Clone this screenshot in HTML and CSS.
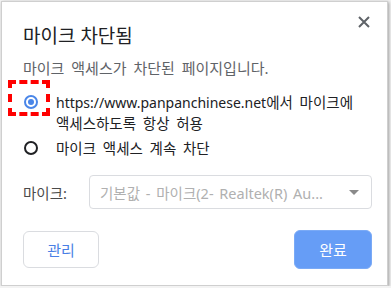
FILE: index.html
```html
<!DOCTYPE html>
<html lang="ko">
<head>
    <meta charset="UTF-8">
    <title>마이크 차단됨</title>
    <link rel="stylesheet" href="styles.css">
</head>
<body>
    <div class="dialog">
        <div class="header">
            <h1 class="title">마이크 차단됨</h1>
            <svg class="close" width="12" height="12" viewBox="0 0 12 12">
                <path d="M1 1 L11 11 M11 1 L1 11" stroke="#5f6368" stroke-width="2"/>
            </svg>
        </div>
        <div class="subtitle">마이크 액세스가 차단된 페이지입니다.</div>

        <div class="option">
            <span class="radio checked"></span>
            <span class="label"><span class="url">https://www.panpanchinese.net</span>에서 마이크에<br>액세스하도록 항상 허용</span>
        </div>
        <div class="option">
            <span class="radio"></span>
            <span class="label">마이크 액세스 계속 차단</span>
        </div>

        <div class="device-row">
            <span class="device-label">마이크:</span>
            <div class="select">
                <span>기본값 - 마이크(2- Realtek(R) Au...</span>
                <span class="arrow"></span>
            </div>
        </div>

        <div class="buttons">
            <button class="btn">관리</button>
            <button class="btn primary">완료</button>
        </div>

        <div class="highlight"></div>
    </div>
</body>
</html>
```

FILE: styles.css
```css
body {
    margin: 0;
    background: #f3f3f3;
    font-family: "Noto Sans", "Noto Sans CJK KR", sans-serif;
}
.dialog {
    position: relative;
    width: 387px;
    height: 285px;
    margin: 1px 0 0 1px;
    box-sizing: border-box;
    padding: 0 17px 0 21px;
    background: #fff;
    border: 1px solid #cfcfcf;
    box-shadow: 1px 1px 3px rgba(0,0,0,0.35);
}
.header {
    display: flex;
    justify-content: space-between;
    align-items: flex-start;
}
.title {
    margin: 22px 0 0;
    font-size: 19px;
    font-weight: normal;
    line-height: 24px;
    color: #202124;
}
.close {
    margin: 14px 0 0;
}
.subtitle {
    margin-top: 10px;
    font-size: 15px;
    line-height: 20px;
    word-spacing: 3px;
    color: #5f6368;
}
.option {
    display: flex;
    align-items: flex-start;
    gap: 18px;
    margin-top: 14px;
    font-size: 14.5px;
    line-height: 20px;
    word-spacing: 3px;
    color: #202124;
}
.option + .option {
    margin-top: 5px;
}
.url {
    font-size: 14px;
}
.radio {
    flex: none;
    width: 14px;
    height: 14px;
    margin: 3px 0 0 1px;
    box-sizing: border-box;
    border: 2px solid #202124;
    border-radius: 50%;
    position: relative;
}
.radio.checked {
    border-color: #4a86e8;
}
.radio.checked::after {
    content: "";
    position: absolute;
    left: 2px;
    top: 2px;
    width: 6px;
    height: 6px;
    border-radius: 50%;
    background: #4a86e8;
}
.device-row {
    display: flex;
    align-items: center;
    margin-top: 17px;
    font-size: 14.5px;
}
.device-label {
    width: 66px;
    color: #4a4a4a;
}
.select {
    flex: 1;
    height: 34px;
    box-sizing: border-box;
    margin-right: -2px;
    padding: 0 10px;
    display: flex;
    align-items: center;
    justify-content: space-between;
    border: 1px solid #dadce0;
    border-radius: 4px;
    color: #b0b0b0;
    word-spacing: 2px;
}
.arrow {
    width: 0;
    height: 0;
    border-left: 5px solid transparent;
    border-right: 5px solid transparent;
    border-top: 5px solid #8a8a8a;
    margin-right: 2px;
}
.buttons {
    display: flex;
    justify-content: space-between;
    align-items: center;
    margin-top: 21px;
    margin-right: -2px;
}
.btn {
    width: 76px;
    height: 37px;
    font-family: inherit;
    font-size: 15px;
    color: #4a7fe5;
    background: #fff;
    border: 1px solid #dadce0;
    border-radius: 6px;
}
.btn.primary {
    width: 78px;
    height: 39px;
    color: #fff;
    background: #669df6;
    border-color: #7aaaf6;
}
.highlight {
    position: absolute;
    left: 6px;
    top: 78px;
    width: 42px;
    height: 36px;
    box-sizing: border-box;
    border: 4px dashed #ff0000;
}
```
